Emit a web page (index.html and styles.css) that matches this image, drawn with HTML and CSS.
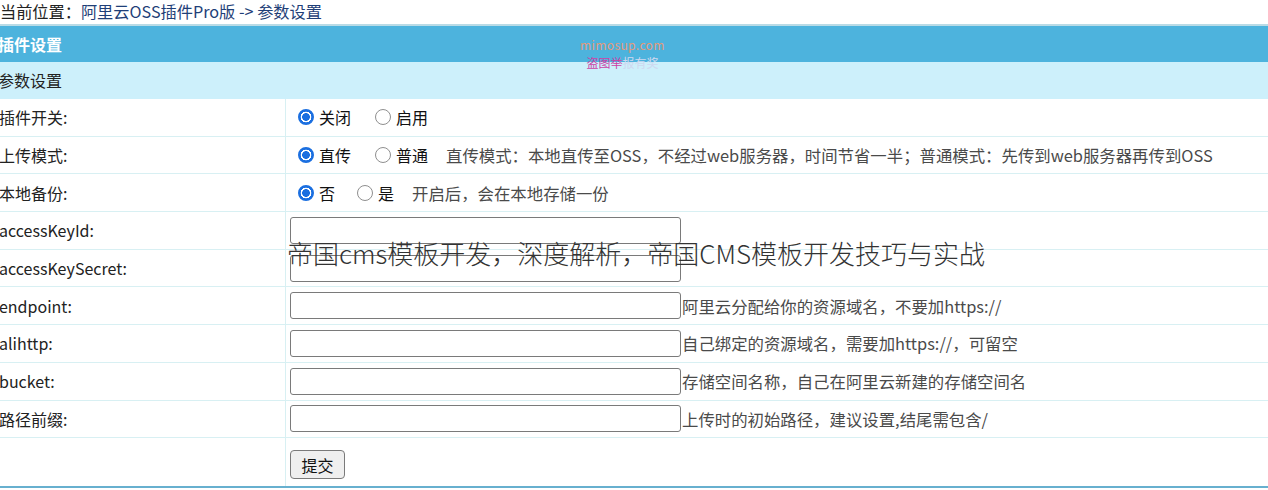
FILE: index.html
```html
<!DOCTYPE html>
<html lang="zh-CN">
<head>
<meta charset="utf-8">
<title>参数设置</title>
<link rel="stylesheet" href="styles.css">
</head>
<body>
<div class="page">
  <div class="crumb">当前位置：<a class="crumb-link">阿里云OSS插件Pro版 -&gt; 参数设置</a></div>
  <div class="panel">
    <div class="head">插件设置</div>
    <div class="sub">参数设置</div>
    <div class="row">
      <div class="lab">插件开关:</div>
      <div class="ctl">
        <label class="opt"><input type="radio" name="sw" checked>关闭</label>
        <label class="opt"><input type="radio" name="sw">启用</label>
      </div>
    </div>
    <div class="row">
      <div class="lab">上传模式:</div>
      <div class="ctl">
        <label class="opt"><input type="radio" name="mode" checked>直传</label>
        <label class="opt"><input type="radio" name="mode">普通</label>
        <span class="hint hint-gap">直传模式：本地直传至OSS，不经过web服务器，时间节省一半；普通模式：先传到web服务器再传到OSS</span>
      </div>
    </div>
    <div class="row">
      <div class="lab">本地备份:</div>
      <div class="ctl">
        <label class="opt opt-short"><input type="radio" name="bk" checked>否</label>
        <label class="opt"><input type="radio" name="bk">是</label>
        <span class="hint hint-gap2">开启后，会在本地存储一份</span>
      </div>
    </div>
    <div class="row">
      <div class="lab">accessKeyId:</div>
      <div class="ctl ctl-in"><input class="txt" type="text"></div>
    </div>
    <div class="row">
      <div class="lab">accessKeySecret:</div>
      <div class="ctl ctl-in"><input class="txt" type="text"></div>
    </div>
    <div class="row">
      <div class="lab">endpoint:</div>
      <div class="ctl ctl-in"><input class="txt" type="text"><span class="hint">阿里云分配给你的资源域名，不要加https://</span></div>
    </div>
    <div class="row">
      <div class="lab">alihttp:</div>
      <div class="ctl ctl-in"><input class="txt" type="text"><span class="hint">自己绑定的资源域名，需要加https://，可留空</span></div>
    </div>
    <div class="row">
      <div class="lab">bucket:</div>
      <div class="ctl ctl-in"><input class="txt" type="text"><span class="hint">存储空间名称，自己在阿里云新建的存储空间名</span></div>
    </div>
    <div class="row">
      <div class="lab">路径前缀:</div>
      <div class="ctl ctl-in"><input class="txt" type="text"><span class="hint">上传时的初始路径，建议设置,结尾需包含/</span></div>
    </div>
    <div class="row row-last">
      <div class="lab"></div>
      <div class="ctl ctl-in"><button class="btn" type="button">提交</button></div>
    </div>
  </div>
  <div class="wm">
    <div class="wm1">mimosup.com</div>
    <div class="wm2"><span class="wm2a">盗图举</span>报有奖</div>
  </div>
  <div class="title">帝国cms模板开发，深度解析，帝国CMS模板开发技巧与实战</div>
</div>
</body>
</html>
```

FILE: styles.css
```css
html, body {
  margin: 0;
  padding: 0;
  background: #ffffff;
}
body {
  font-family: "Noto Sans CJK SC", "Liberation Sans", sans-serif;
  font-size: 16px;
  color: #222;
  overflow: hidden;
}
.page {
  position: relative;
  width: 1272px;
  margin-left: -4px;
}
.crumb {
  height: 24px;
  font-size: 16.2px;
  line-height: 22px;
  color: #222;
  padding-left: 4px;
}
.crumb-link {
  color: #1f3f78;
}
.panel {
  border-top: 2px solid #b9dbe6;
  border-bottom: 2px solid #67b0cf;
}
.head {
  height: 36px;
  line-height: 36px;
  background: #4db3dd;
  color: #ffffff;
  font-weight: bold;
  padding-left: 2px;
}
.sub {
  height: 37px;
  line-height: 37px;
  background: #cdf0fb;
  color: #222;
  padding-left: 2px;
}
.row {
  display: grid;
  grid-template-columns: 290px 1fr;
  height: 37.7px;
  box-sizing: border-box;
  border-bottom: 1px solid #d8f0f3;
}
.row-last {
  height: 48px;
  border-bottom: 0;
}
.lab {
  display: flex;
  align-items: center;
  padding-left: 3px;
  border-right: 1px solid #d8f0f3;
  color: #222;
}
.ctl {
  display: flex;
  align-items: center;
  padding-left: 12px;
}
.ctl-in {
  padding-left: 4px;
}
.opt {
  display: inline-flex;
  align-items: center;
  margin-right: 24px;
  color: #111;
}
.opt-short {
  margin-right: 22px;
}
.opt input {
  appearance: none;
  -webkit-appearance: none;
  width: 16px;
  height: 16px;
  margin: 0 5px 0 0;
  border-radius: 50%;
  border: 1px solid #8f8f8f;
  background: #fff;
  box-sizing: border-box;
}
.opt input:checked {
  border: 2px solid #1b6fe0;
  background: radial-gradient(circle, #1b6fe0 0 3.6px, #ffffff 4.1px 5.2px, #1b6fe0 5.6px);
}
.hint {
  color: #4a4a4a;
  font-size: 16.4px;
  white-space: nowrap;
}
.hint-gap {
  margin-left: -6px;
}
.hint-gap2 {
  margin-left: -6px;
}
.txt {
  width: 391px;
  height: 27px;
  box-sizing: border-box;
  border: 1px solid #7a7a7a;
  border-radius: 3px;
  margin: 0 1px 0 0;
  padding: 0 4px;
  background: #fff;
}
.btn {
  width: 55px;
  height: 29px;
  margin-top: 5px;
  font-family: "Noto Sans CJK SC", sans-serif;
  font-size: 16px;
  line-height: 20px;
  background: #efefef;
  border: 1px solid #7a7a7a;
  border-radius: 4px;
  color: #111;
  padding: 0;
}
.wm {
  position: absolute;
  left: 584px;
  top: 38px;
  font-size: 12px;
  line-height: 14px;
  text-align: center;
}
.wm1 {
  color: #e39a7c;
  letter-spacing: 0.4px;
}
.wm2 {
  margin-top: 4px;
  color: #cfd8f0;
  font-size: 12px;
}
.wm2a {
  color: #cc3fa6;
}
.title {
  position: absolute;
  left: 291px;
  top: 236px;
  font-family: "Noto Sans CJK SC", sans-serif;
  font-weight: 300;
  font-size: 26px;
  line-height: 34px;
  color: #333;
  white-space: nowrap;
}
```
